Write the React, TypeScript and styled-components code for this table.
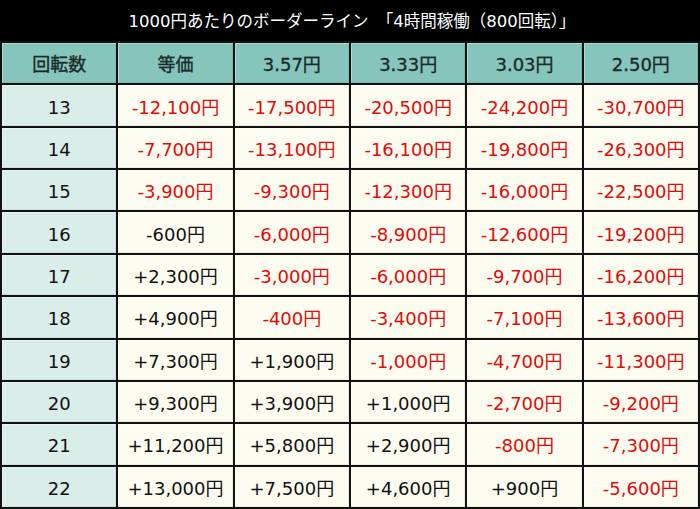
import React from "react";
import styled, { createGlobalStyle } from "styled-components";

const GlobalStyle = createGlobalStyle`
  html, body {
    margin: 0;
    padding: 0;
    background: #000;
  }
  body {
    font-family: "DejaVu Sans", "Noto Sans CJK JP", sans-serif;
  }
`;

const Wrapper = styled.div`
  width: 700px;
  height: 509px;
  background: #000;
  display: flex;
  flex-direction: column;
`;

const Title = styled.div`
  height: 41px;
  display: flex;
  align-items: center;
  justify-content: center;
  color: #fff;
  font-size: 16.5px;
  line-height: 1;
  padding: 3px 0 0 4px;
  box-sizing: border-box;
`;

const Grid = styled.div`
  flex: 1;
  display: grid;
  grid-template-columns: repeat(6, 1fr);
  grid-auto-rows: 1fr;
  gap: 2px;
  padding: 2px;
  background: #111;
`;

type Kind = "head" | "side" | "body";

const Cell = styled.div<{ $kind: Kind; $neg?: boolean }>`
  display: flex;
  align-items: center;
  justify-content: center;
  padding-top: 4px;
  box-sizing: border-box;
  font-size: 18px;
  line-height: 1;
  color: ${(p) => (p.$neg ? "#e20a0a" : p.$kind === "head" ? "#1b2b29" : "#111")};
  -webkit-text-stroke: ${(p) => (p.$kind === "head" ? "0.35px" : "0")};
  background: ${(p) =>
    p.$kind === "head" ? "#86c5bc" : p.$kind === "side" ? "#d9ede9" : "#fdfcf0"};
  box-shadow: inset 1px 1px 0 rgba(255, 255, 255, 0.35),
    inset -1px -1px 0 rgba(0, 0, 0, 0.06);
`;

const heads = ["回転数", "等価", "3.57円", "3.33円", "3.03円", "2.50円"];

const rows: [string, string[]][] = [
  ["13", ["-12,100円", "-17,500円", "-20,500円", "-24,200円", "-30,700円"]],
  ["14", ["-7,700円", "-13,100円", "-16,100円", "-19,800円", "-26,300円"]],
  ["15", ["-3,900円", "-9,300円", "-12,300円", "-16,000円", "-22,500円"]],
  ["16", ["-600円", "-6,000円", "-8,900円", "-12,600円", "-19,200円"]],
  ["17", ["+2,300円", "-3,000円", "-6,000円", "-9,700円", "-16,200円"]],
  ["18", ["+4,900円", "-400円", "-3,400円", "-7,100円", "-13,600円"]],
  ["19", ["+7,300円", "+1,900円", "-1,000円", "-4,700円", "-11,300円"]],
  ["20", ["+9,300円", "+3,900円", "+1,000円", "-2,700円", "-9,200円"]],
  ["21", ["+11,200円", "+5,800円", "+2,900円", "-800円", "-7,300円"]],
  ["22", ["+13,000円", "+7,500円", "+4,600円", "+900円", "-5,600円"]],
];

const isRed = (v: string, col: number) =>
  v.startsWith("-") && !(col === 0 && v === "-600円");

export default function App() {
  return (
    <Wrapper>
      <GlobalStyle />
      <Title>1000円あたりのボーダーライン　「4時間稼働（800回転）」</Title>
      <Grid>
        {heads.map((h) => (
          <Cell key={h} $kind="head">
            {h}
          </Cell>
        ))}
        {rows.map(([spins, vals]) => (
          <React.Fragment key={spins}>
            <Cell $kind="side">{spins}</Cell>
            {vals.map((v, i) => (
              <Cell key={i} $kind="body" $neg={isRed(v, i)}>
                {v}
              </Cell>
            ))}
          </React.Fragment>
        ))}
      </Grid>
    </Wrapper>
  );
}
